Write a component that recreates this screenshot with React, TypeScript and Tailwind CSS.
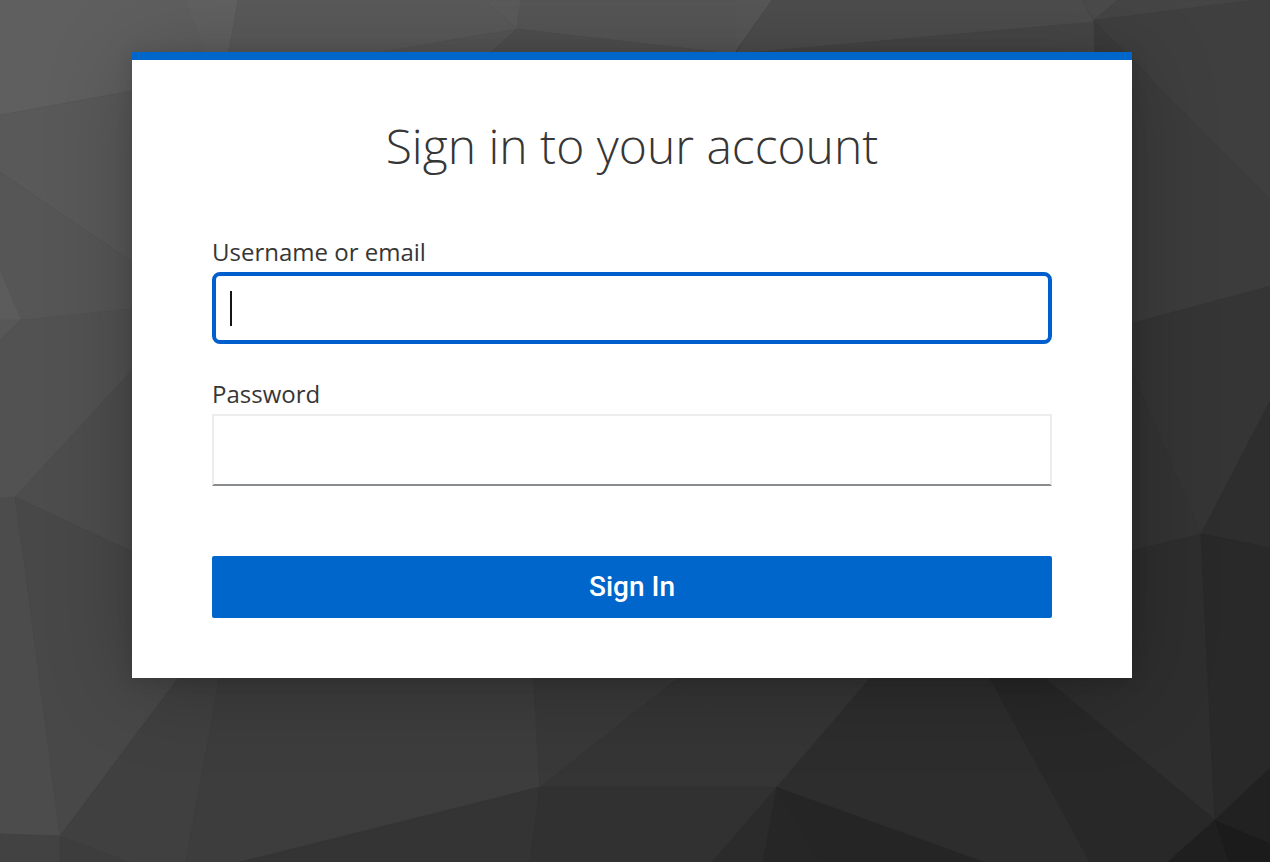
import { useState, type FormEvent, type InputHTMLAttributes } from "react";

// Faces of the low-poly backdrop, in a 1270x862 viewBox.
const FACES: { points: string; fill: string }[] = [
  // top edge
  { points: "0,0 185,0 222,80 132,91 0,115", fill: "#5f5f5f" },
  { points: "185,0 238,0 222,90", fill: "#616161" },
  { points: "238,0 484,0 517,29 370,54 222,90", fill: "#5a5a5a" },
  { points: "484,0 521,0 517,29", fill: "#5b5b5b" },
  { points: "517,29 370,54 370,90 450,90", fill: "#555555" },
  { points: "521,0 735,0 735,54 517,29", fill: "#565656" },
  { points: "517,29 735,54 735,90 450,90", fill: "#4f4f4f" },
  { points: "735,0 772,0 735,52", fill: "#575757" },
  { points: "772,0 1082,0 1094,22 735,54", fill: "#4d4d4d" },
  { points: "1094,22 735,54 735,90 1100,90", fill: "#464646" },
  { points: "1082,0 1118,0 1094,20", fill: "#4b4b4b" },
  { points: "1118,0 1253,0 1094,20", fill: "#454545" },

  // right edge
  { points: "1253,0 1270,0 1270,200 1094,21", fill: "#3f3f3f" },
  { points: "1094,21 1270,200 1270,286 1100,332", fill: "#3c3c3c" },
  { points: "1100,332 1270,286 1270,401 1201,533 1110,320", fill: "#353535" },
  { points: "1110,320 1201,534 1110,556", fill: "#333333" },
  { points: "1270,401 1270,548 1201,534", fill: "#2e2e2e" },
  { points: "1201,534 1215,820 1000,640 1110,556", fill: "#2e2e2e" },
  { points: "1201,534 1270,548 1270,768 1215,820", fill: "#292929" },

  // left edge
  { points: "0,115 132,91 160,86 160,281 0,172", fill: "#595959" },
  { points: "0,172 160,281 160,306 21,320 0,270", fill: "#565656" },
  { points: "0,270 21,320 0,320", fill: "#5c5c5c" },
  { points: "0,320 21,320 0,340", fill: "#575757" },
  { points: "21,320 160,306 160,340 15,497 0,499 0,340", fill: "#525252" },
  { points: "15,497 160,340 160,565", fill: "#4d4d4d" },
  { points: "0,498 15,497 24,560 60,836 0,834", fill: "#4c4c4c" },
  { points: "15,497 160,565 200,649 60,836 24,560", fill: "#484848" },

  // bottom edge
  { points: "0,834 60,836 60,862 0,862", fill: "#424242" },
  { points: "60,836 130,862 60,862", fill: "#3d3d3d" },
  { points: "60,836 200,649 225,649 186,862 130,862", fill: "#404040" },
  { points: "225,649 532,649 540,787 240,862 186,862", fill: "#3d3d3d" },
  { points: "532,649 715,649 540,787", fill: "#393939" },
  { points: "540,787 530,862 240,862", fill: "#343434" },
  { points: "540,787 715,649 650,649 777,787", fill: "#353535" },
  { points: "650,649 895,649 777,787", fill: "#353535" },
  { points: "540,787 777,787 712,862 530,862", fill: "#313131" },
  { points: "777,787 763,862 712,862", fill: "#2b2b2b" },
  { points: "777,787 820,862 763,862", fill: "#262626" },
  { points: "777,787 985,862 820,862", fill: "#252525" },
  { points: "777,787 895,649 974,649 1090,862 985,862", fill: "#2d2d2d" },
  { points: "974,649 1010,649 1215,820 1168,862 1090,862", fill: "#282828" },
  { points: "1215,820 1229,862 1168,862", fill: "#1f1f1f" },
  { points: "1215,820 1270,843 1270,862 1229,862", fill: "#1b1b1b" },
  { points: "1215,820 1270,768 1270,843", fill: "#212121" },
];

function Backdrop() {
  return (
    <svg
      className="absolute inset-0 -z-10 h-full w-full"
      viewBox="0 0 1270 862"
      preserveAspectRatio="xMidYMid slice"
      aria-hidden="true"
    >
      {FACES.map((face) => (
        <polygon
          key={face.points}
          points={face.points}
          fill={face.fill}
          stroke={face.fill}
          strokeWidth="0.6"
        />
      ))}
    </svg>
  );
}

interface FieldProps extends InputHTMLAttributes<HTMLInputElement> {
  id: string;
  label: string;
}

function Field({ id, label, ...props }: FieldProps) {
  const [focused, setFocused] = useState(Boolean(props.autoFocus));
  const [empty, setEmpty] = useState(true);

  return (
    <div className="flex flex-col">
      <label htmlFor={id} className="pb-1 text-2xl text-[#363636]">
        {label}
      </label>
      <div className="relative">
        <input
          {...props}
          id={id}
          onFocus={() => setFocused(true)}
          onBlur={() => setFocused(false)}
          onChange={(e) => setEmpty(e.target.value === "")}
          className={`block h-[72px] w-full bg-white px-4 text-2xl text-[#151515] outline-none ${
            focused
              ? "rounded-lg border-4 border-[#005fcc]"
              : "border-2 border-[#ededed] border-b-[#8a8d90]"
          } ${empty ? "caret-transparent" : "caret-[#151515]"}`}
        />
        {/* thick caret while the field is empty */}
        {focused && empty && (
          <span className="pointer-events-none absolute top-[19px] left-[18px] h-[35px] w-0.5 bg-[#151515]" />
        )}
      </div>
    </div>
  );
}

export default function App() {
  const onSubmit = (e: FormEvent) => e.preventDefault();

  return (
    <div className="relative isolate min-h-screen overflow-hidden bg-[#3d3d3d] pt-[52px] pr-1.5 pb-16 font-['Open_Sans','Noto_Sans',sans-serif]">
      <Backdrop />
      <main className="mx-auto w-full max-w-[1000px] border-t-8 border-[#0066cc] bg-white px-20 pt-14 pb-[60px] shadow-[0_8px_80px_rgba(0,0,0,0.24),0_2px_16px_rgba(0,0,0,0.12)]">
        <h1 className="text-center text-5xl leading-[60px] font-light text-[#363636]">
          Sign in to your account
        </h1>
        <form onSubmit={onSubmit} className="mt-[60px]">
          <div className="flex flex-col gap-[34px]">
            <Field id="username" label="Username or email" type="text" autoFocus autoComplete="off" />
            <Field id="password" label="Password" type="password" autoComplete="off" />
          </div>
          <button
            type="submit"
            className="mt-[70px] block h-[62px] w-full rounded-xs bg-[#0066cc] font-['Roboto',sans-serif] text-[28px] leading-8 font-medium text-white"
          >
            Sign In
          </button>
        </form>
      </main>
    </div>
  );
}
